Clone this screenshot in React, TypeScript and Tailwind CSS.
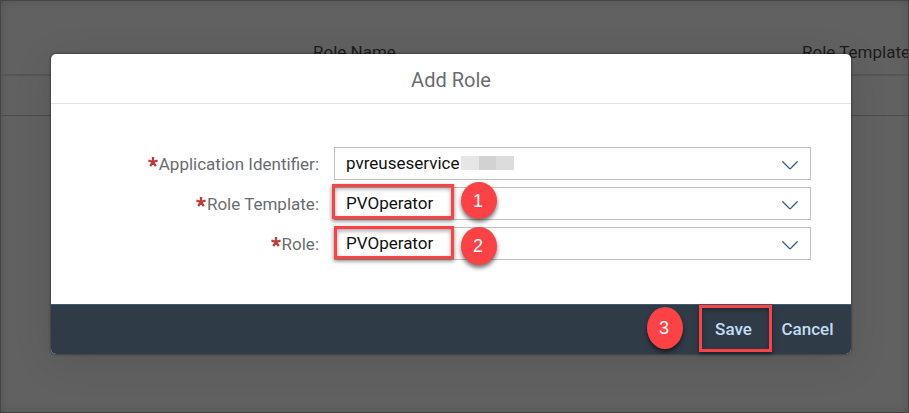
import { useId, type ReactNode } from "react";

function Chevron() {
  return (
    <svg
      viewBox="0 0 16 9"
      className="pointer-events-none absolute right-[13px] top-[14px] h-[9px] w-4"
      fill="none"
      stroke="#346187"
      strokeWidth="1.3"
      strokeLinecap="round"
      aria-hidden="true"
    >
      <path d="M0.8 0.8 L7.2 7.3 Q8 8 8.8 7.3 L15.2 0.8" />
    </svg>
  );
}

function Asterisk() {
  return (
    <svg
      viewBox="0 0 10 10"
      className="mr-px mb-[3px] size-[10px]"
      fill="none"
      stroke="#c03a3a"
      strokeWidth="2.3"
      aria-hidden="true"
    >
      <path d="M5 0 V5 M0.4 3.5 L5 5 L9.6 3.5 M2.2 9.2 L5 5 L7.8 9.2" />
    </svg>
  );
}

function Field({ label, value, children }: { label: string; value: string; children?: ReactNode }) {
  const id = useId();
  return (
    <div className="grid grid-cols-[252fr_477fr] items-center gap-[15px]">
      <label htmlFor={id} className="flex items-center justify-end whitespace-nowrap text-[#6a6d70]">
        <Asterisk />
        {label}:
      </label>
      <div className="relative">
        <select
          id={id}
          required
          defaultValue={value}
          className="block h-[33px] w-full appearance-none border border-[#bfbfbf] bg-white pr-10 pb-[2px] pl-[11px] text-[#111] outline-none"
        >
          <option>{value}</option>
        </select>
        <Chevron />
        {children}
      </div>
    </div>
  );
}

const frame =
  "pointer-events-none absolute border-3 border-[#fd4245] shadow-[0_2px_4px_rgba(0,0,0,0.5),inset_0_2px_4px_rgba(0,0,0,0.35)]";
const badge =
  "pointer-events-none absolute flex items-center justify-center rounded-[50%] bg-[#fd4245] pr-[2px] font-['Liberation_Sans',sans-serif] text-lg leading-5 font-normal text-white shadow-[0_3px_4px_rgba(0,0,0,0.55)]";

export default function App() {
  return (
    <div className="relative min-h-screen overflow-hidden border border-[#454545] bg-[#616161] font-[Roboto,sans-serif] text-[17px] leading-5 shadow-[inset_0_0_8px_rgba(0,0,0,0.15)]">
      <table className="w-full table-fixed border-collapse text-left text-[#1c1c1c]">
        <thead>
          <tr className="h-[74px] border-b-2 border-[#555]">
            <th className="w-[312px]" />
            <th className="pt-7 font-normal">Role Name</th>
            <th className="w-[106px] pt-7 font-normal whitespace-nowrap">Role Template</th>
          </tr>
        </thead>
        <tbody>
          <tr className="h-10 border-b border-[#4b4b4b]">
            <td colSpan={3} />
          </tr>
        </tbody>
      </table>

      <div className="absolute inset-0 pt-[53px] pr-[57px] pl-[50px]">
        <section
          role="dialog"
          aria-labelledby="dialog-title"
          className="rounded-[5px] bg-white shadow-[0_0_3px_rgba(0,0,0,0.6),0_8px_40px_rgba(0,0,0,0.1)]"
        >
          <header className="border-b border-[#e5e5e5] pt-[14px] pb-[10px]">
            <h1 id="dialog-title" className="text-center text-xl leading-[25px] text-[#6a6d70]">
              Add Role
            </h1>
          </header>

          <form className="flex flex-col gap-[7px] pt-[43px] pr-10 pb-11 pl-4">
            <Field label="Application Identifier" value="pvreuseservice">
              <div className="absolute top-[9px] left-[127px] flex h-[14px]">
                <span className="w-[18px] bg-[#e6e6e6]" />
                <span className="w-[17px] bg-[#d2d2d2]" />
                <span className="w-[18px] bg-[#dcdcdc]" />
              </div>
            </Field>
            <Field label="Role Template" value="PVOperator">
              <span className={`${frame} -top-[3px] -left-[2px] h-[35px] w-[122px]`} />
              <span className={`${badge} -top-[5px] left-[127px] h-[37px] w-9`}>1</span>
            </Field>
            <Field label="Role" value="PVOperator">
              <span className={`${frame} -top-px left-0 h-[33px] w-[120px]`} />
              <span className={`${badge} top-0 left-[127px] h-[38px] w-9`}>2</span>
            </Field>
          </form>

          <footer className="flex h-[50px] items-start justify-end rounded-b-[5px] border-t border-[#3f596f] bg-[#2f3c48] pr-1 font-medium text-[#c3dcf3]">
            <div className="relative">
              <button type="button" className="h-[47px] w-[73px] pr-1">
                Save
              </button>
              <span className={`${frame} inset-0`} />
              <span className={`${badge} top-[2px] -left-[52px] h-[42px] w-9`}>3</span>
            </div>
            <button type="button" className="h-[47px] w-[75px] pr-1">
              Cancel
            </button>
          </footer>
        </section>
      </div>
    </div>
  );
}
